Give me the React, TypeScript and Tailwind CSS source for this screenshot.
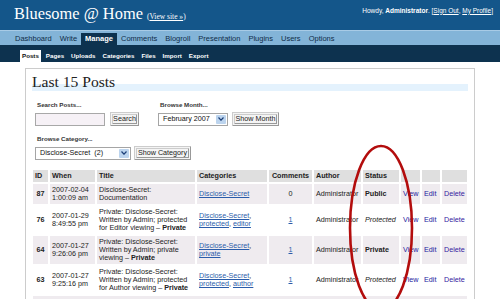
import React from 'react'

const navItems = ['Dashboard', 'Write', 'Manage', 'Comments', 'Blogroll', 'Presentation', 'Plugins', 'Users', 'Options']
const subItems = ['Posts', 'Pages', 'Uploads', 'Categories', 'Files', 'Import', 'Export']

type Row = {
    id: string
    when: [string, string]
    title: React.ReactNode
    cats: React.ReactNode
    comments: React.ReactNode
    status: React.ReactNode
    alt: boolean
}

const Cat = ({ children }: { children: React.ReactNode }) => (
    <span className="text-[#2a5caa] underline">{children}</span>
)

const rows: Row[] = [
    {
        id: '87',
        when: ['2007-02-04', '1:00:09 am'],
        title: <>Disclose-Secret:<br />Documentation</>,
        cats: <Cat>Disclose-Secret</Cat>,
        comments: '0',
        status: <b>Public</b>,
        alt: true,
    },
    {
        id: '76',
        when: ['2007-01-29', '8:49:55 pm'],
        title: <>Private: Disclose-Secret:<br />Written by Admin; protected<br />for Editor viewing – <b>Private</b></>,
        cats: <><Cat>Disclose-Secret</Cat>,<br /><Cat>protected</Cat>, <Cat>editor</Cat></>,
        comments: <Cat>1</Cat>,
        status: <i>Protected</i>,
        alt: false,
    },
    {
        id: '64',
        when: ['2007-01-27', '9:26:06 pm'],
        title: <>Private: Disclose-Secret:<br />Written by Admin; private<br />viewing – <b>Private</b></>,
        cats: <><Cat>Disclose-Secret</Cat>,<br /><Cat>private</Cat></>,
        comments: <Cat>1</Cat>,
        status: <b>Private</b>,
        alt: true,
    },
    {
        id: '63',
        when: ['2007-01-27', '9:25:16 pm'],
        title: <>Private: Disclose-Secret:<br />Written by Admin; protected<br />for Author viewing – <b>Private</b></>,
        cats: <><Cat>Disclose-Secret</Cat>,<br /><Cat>protected</Cat>, <Cat>author</Cat></>,
        comments: <Cat>1</Cat>,
        status: <i>Protected</i>,
        alt: false,
    },
]

function FakeSelect({ value, width }: { value: string; width: string }) {
    return (
        <div className={`${width} h-[13px] flex items-center justify-between border border-[#a5a5a5] bg-white pl-[4px] pr-[1px]`}>
            <span className="whitespace-pre text-[7.2px] leading-[8px] text-[#111]">{value}</span>
            <span className="w-[10px] h-[9px] flex items-center justify-center bg-[#bcd4ee] rounded-[1px]">
                <svg width="6" height="4" viewBox="0 0 6 4">
                    <path d="M0.5 0.5 L3 3.2 L5.5 0.5" fill="none" stroke="#1c3f78" strokeWidth="1.2" />
                </svg>
            </span>
        </div>
    )
}

function Button({ label, width }: { label: string; width: string }) {
    return (
        <div className={`${width} h-[14px] border-[3px] border-double border-[#999] border-l-[#ccc] border-t-[#ccc] bg-[#f4f4f4] text-center text-[7.2px] leading-[8px] text-[#222]`}>
            {label}
        </div>
    )
}

function Label({ children }: { children: React.ReactNode }) {
    return <div className="pl-[2px] text-[6.2px] font-bold leading-[8px] text-[#333]">{children}</div>
}

export default function App() {
    return (
        <div className="relative w-[500px] h-[299px] overflow-hidden bg-white font-['Liberation_Sans',Arial,sans-serif] text-[#333]">
            {/* header */}
            <div className="h-[30px] bg-[#14568a] flex justify-between pl-[14px] pr-[7px]">
                <div className="pt-[5px] leading-[18px] text-white font-['Liberation_Serif','Times_New_Roman',serif]">
                    <span className="text-[16.4px]">Bluesome @ Home</span>{' '}
                    <span className="text-[7.5px]">(<span className="underline">View site »</span>)</span>
                </div>
                <div className="pt-[6.5px] text-[6.5px] leading-[8px] text-white">
                    Howdy, <b>Administrator</b>. [<span className="underline">Sign Out</span>, <span className="underline">My Profile</span>]
                </div>
            </div>

            {/* main nav */}
            <div className="h-[15px] bg-[#83b4d8] border-t border-[#a8cbe6] flex items-end pl-[11px] text-[7.5px]">
                {navItems.map((item) => (
                    <div
                        key={item}
                        className={
                            item === 'Manage'
                                ? 'h-[12px] leading-[12px] px-[4px] bg-[#0d324f] text-white font-bold'
                                : 'h-[12px] leading-[12px] px-[4px] text-[#0f2c48]'
                        }
                    >
                        {item}
                    </div>
                ))}
            </div>

            {/* sub nav */}
            <div className="h-[17px] bg-[#0d324f] flex items-end gap-[3px] pl-[20px] text-[6.2px] font-bold">
                {subItems.map((item) => (
                    <div
                        key={item}
                        className={
                            item === 'Posts'
                                ? 'h-[12px] leading-[11px] px-[2px] bg-white text-[#111]'
                                : 'h-[12px] leading-[11px] px-[2px] text-white'
                        }
                    >
                        {item}
                    </div>
                ))}
            </div>

            {/* wrap */}
            <div className="mt-[6px] ml-[25px] w-[450px] h-[260px] border border-[#cccccc] bg-white">
                <h2 className="mt-[11px] mx-[6px] h-[11px] border-b-[7px] border-[#e4f2fd] font-['Liberation_Serif','Times_New_Roman',serif] text-[15.6px] leading-[4px] text-[#222]">
                    Last 15 Posts
                </h2>

                <div className="mt-[10px] pl-[9px]">
                    <div className="flex gap-[19px]">
                        <div>
                            <Label>Search Posts...</Label>
                            <div className="mt-[3px] flex items-center gap-[5px]">
                                <div className="w-[70px] h-[13px] border border-[#a8a8a8] bg-[#f6f1f6]" />
                                <Button label="Search" width="w-[29px]" />
                            </div>
                        </div>
                        <div>
                            <Label>Browse Month...</Label>
                            <div className="mt-[3px] flex items-center gap-[4px]">
                                <FakeSelect value="February 2007" width="w-[70px]" />
                                <Button label="Show Month" width="w-[47px]" />
                            </div>
                        </div>
                    </div>
                    <div className="mt-[9px]">
                        <Label>Browse Category...</Label>
                        <div className="mt-[3px] flex items-center gap-[3px]">
                            <FakeSelect value="Disclose-Secret  (2)" width="w-[96px]" />
                            <Button label="Show Category" width="w-[57px]" />
                        </div>
                    </div>
                </div>

                <table className="mt-[8px] ml-[5px] w-[438px] table-fixed border-separate border-spacing-[2px] text-[7.2px] leading-[8px] text-[#222]">
                    <colgroup>
                        <col className="w-[15px]" />
                        <col className="w-[45px]" />
                        <col className="w-[98px]" />
                        <col className="w-[70px]" />
                        <col className="w-[43px]" />
                        <col className="w-[47px]" />
                        <col className="w-[36px]" />
                        <col className="w-[19px]" />
                        <col className="w-[18px]" />
                        <col className="w-[25px]" />
                    </colgroup>
                    <thead>
                        <tr className="bg-[#dfdfdf] font-bold">
                            <th className="px-[2px] py-[2px] text-left">ID</th>
                            <th className="px-[2px] py-[2px] text-left">When</th>
                            <th className="px-[2px] py-[2px] text-left">Title</th>
                            <th className="px-[2px] py-[2px] text-left">Categories</th>
                            <th className="px-[2px] py-[2px] text-center">Comments</th>
                            <th className="px-[2px] py-[2px] text-left">Author</th>
                            <th className="px-[2px] py-[2px] text-left">Status</th>
                            <th></th>
                            <th></th>
                            <th></th>
                        </tr>
                    </thead>
                    <tbody>
                        {rows.map((r) => (
                            <tr key={r.id} className={r.alt ? 'bg-[#efebef]' : 'bg-white'}>
                                <td className="px-[1px] py-[2px] text-center font-bold">{r.id}</td>
                                <td className="px-[2px] py-[2px] whitespace-nowrap">{r.when[0]}<br />{r.when[1]}</td>
                                <td className="px-[2px] py-[2px] whitespace-nowrap">{r.title}</td>
                                <td className="px-[2px] py-[2px] whitespace-nowrap">{r.cats}</td>
                                <td className="px-[2px] py-[2px] text-center">{r.comments}</td>
                                <td className="px-[2px] py-[2px] whitespace-nowrap">Administrator</td>
                                <td className="px-[2px] py-[2px] whitespace-nowrap">{r.status}</td>
                                <td className="px-[2px] py-[2px] text-[#2222a0]">View</td>
                                <td className="px-[2px] py-[2px] text-[#2222a0]">Edit</td>
                                <td className="px-[2px] py-[2px] text-[#3322a0]">Delete</td>
                            </tr>
                        ))}
                        <tr className="bg-[#efebef]">
                            <td className="py-[2px] h-[28px]" colSpan={10}></td>
                        </tr>
                    </tbody>
                </table>
            </div>

            {/* annotation */}
            <svg className="absolute left-0 top-0 pointer-events-none" width="500" height="299">
                <ellipse cx="381" cy="228" rx="31" ry="82" fill="none" stroke="#b30d0d" strokeWidth="2.6" />
            </svg>
        </div>
    )
}
